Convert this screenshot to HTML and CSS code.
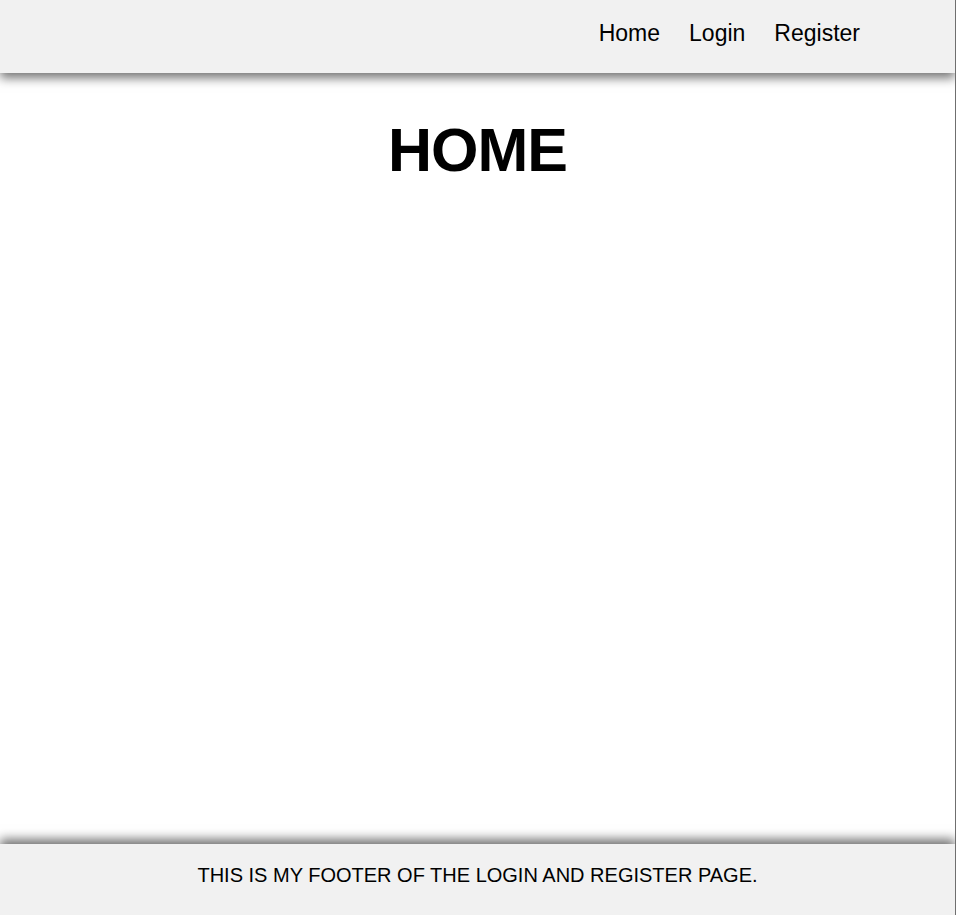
FILE: index.html
```html
<!DOCTYPE html>
<html lang="en">
<head>
<meta charset="utf-8">
<title>Home</title>
<link rel="stylesheet" href="styles.css">
</head>
<body>
<div class="page">
  <header class="site-header">
    <nav class="nav">
      <a class="nav-link" href="#">Home</a>
      <a class="nav-link" href="#">Login</a>
      <a class="nav-link" href="#">Register</a>
    </nav>
  </header>
  <main class="content">
    <h1 class="title">HOME</h1>
  </main>
  <footer class="site-footer">
    <p class="footer-text">THIS IS MY FOOTER OF THE LOGIN AND REGISTER PAGE.</p>
  </footer>
</div>
</body>
</html>
```
FILE: styles.css
```css
html, body {
  margin: 0;
  padding: 0;
  background: #ffffff;
}
body {
  font-family: "Liberation Sans", Arial, sans-serif;
  color: #000;
}
.page {
  width: 955px;
  min-height: 915px;
  border-right: 1px solid #6f6f6f;
  display: flex;
  flex-direction: column;
  overflow: hidden;
}
.site-header {
  height: 73px;
  box-sizing: border-box;
  background: #f1f1f1;
  box-shadow: 0 5px 10px rgba(0, 0, 0, 0.55);
  position: relative;
  z-index: 2;
  padding-top: 20px;
}
.nav {
  display: flex;
  justify-content: flex-end;
  gap: 29px;
  padding-right: 95px;
}
.nav-link {
  font-size: 23px;
  color: #000;
  text-decoration: none;
}
.content {
  flex: 1;
  text-align: center;
}
.title {
  margin: 42px 0 0;
  font-size: 61px;
  font-weight: 700;
  letter-spacing: -1px;
}
.site-footer {
  height: 71px;
  box-sizing: border-box;
  background: #f1f1f1;
  box-shadow: 0 -5px 10px rgba(0, 0, 0, 0.55);
  position: relative;
  z-index: 2;
  padding-top: 20px;
  text-align: center;
}
.footer-text {
  margin: 0;
  font-size: 20px;
}
```
